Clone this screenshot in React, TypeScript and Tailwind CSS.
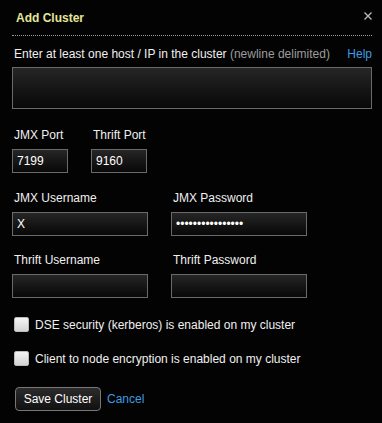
import React from "react";

function Field({ label, value, width }: { label: string; value?: string; width: string }) {
  return (
    <div className="flex flex-col">
      <div className="pl-[2px] h-[16px] leading-[16px] text-[#f0f0f0]">{label}</div>
      <div
        className={`${width} mt-[6px] h-[24px] border border-[#6a6a6a] bg-gradient-to-b from-[#262626] to-[#080808] flex items-center pl-[4px] text-white`}
      >
        {value}
      </div>
    </div>
  );
}

function Check({ label }: { label: string }) {
  return (
    <div className="flex items-center h-[15px] pl-[2px]">
      <div className="w-[15px] h-[15px] rounded-[2px] bg-gradient-to-b from-[#f4f4f4] to-[#d4d4d4] border border-[#bbb]" />
      <span className="ml-[6px] text-[#f0f0f0]">{label}</span>
    </div>
  );
}

export default function App() {
  return (
    <div className="w-[382px] h-[423px] bg-[#030303] pl-3 pr-[10px] text-[12px] text-[#f0f0f0] overflow-hidden" style={{ fontFamily: '"Liberation Sans", Arial, sans-serif' }}>
      <div className="h-[36px] flex items-center justify-between border-b border-dotted border-[#9a9a9a]">
        <span className="pl-1 font-bold text-[12px] text-[#e4e69a]">Add Cluster</span>
        <svg width="10" height="10" viewBox="0 0 10 10" className="-mr-[1px] -mt-[3px]">
          <path d="M1.5 1.5 L8.5 8.5 M8.5 1.5 L1.5 8.5" stroke="#b8b8b8" strokeWidth="1.4" />
        </svg>
      </div>
      <div className="mt-[10px] h-[16px] leading-[16px] flex justify-between pl-[2px]">
        <span>
          Enter at least one host / IP in the cluster <span className="text-[#9c9c9c]">(newline delimited)</span>
        </span>
        <span className="text-[#3d9be0]">Help</span>
      </div>
      <div className="mt-[5px] h-[42px] border border-[#6a6a6a] bg-gradient-to-b from-[#262626] to-[#080808]" />
      <div className="mt-[18px] flex gap-[23px]">
        <Field label="JMX Port" value="7199" width="w-[56px]" />
        <Field label="Thrift Port" value="9160" width="w-[56px]" />
      </div>
      <div className="mt-[17px] flex gap-[23px]">
        <Field label="JMX Username" value="X" width="w-[136px]" />
        <Field label="JMX Password" value="••••••••••••••••" width="w-[136px]" />
      </div>
      <div className="mt-[16px] flex gap-[23px]">
        <Field label="Thrift Username" width="w-[136px]" />
        <Field label="Thrift Password" width="w-[136px]" />
      </div>
      <div className="mt-[19px]">
        <Check label="DSE security (kerberos) is enabled on my cluster" />
      </div>
      <div className="mt-[19px]">
        <Check label="Client to node encryption is enabled on my cluster" />
      </div>
      <div className="mt-[21px] flex items-center">
        <button className="ml-[3px] h-[24px] w-[86px] rounded-[4px] border border-[#777] bg-gradient-to-b from-[#2c2c2c] to-[#111] text-white text-[12px]">
          Save Cluster
        </button>
        <span className="ml-[6px] text-[#3d9be0]">Cancel</span>
      </div>
    </div>
  );
}
